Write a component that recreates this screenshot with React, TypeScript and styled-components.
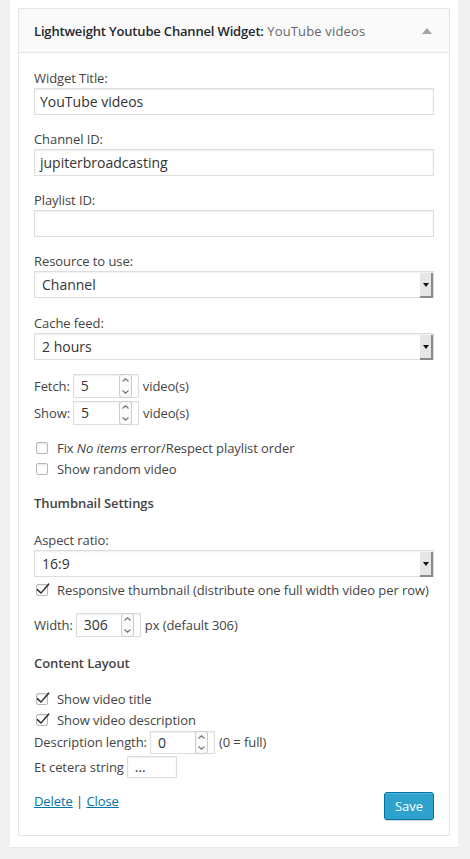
import React from "react";
import styled, { createGlobalStyle } from "styled-components";

const GlobalStyle = createGlobalStyle`
  html, body {
    margin: 0;
    padding: 0;
    background: #f1f1f1;
  }
  body {
    font-family: "Open Sans", "Noto Sans", sans-serif;
    font-size: 13px;
    letter-spacing: -0.08px;
    color: #444;
  }
`;

const Page = styled.div`
  width: 470px;
  padding-bottom: 11px;
`;

const Panel = styled.div`
  margin-left: 10px;
  width: 448px;
  box-sizing: border-box;
  background: #fff;
  padding: 8px 8px 11px;
  box-shadow: 0 1px 1px rgba(0, 0, 0, 0.04);
`;

const Widget = styled.div`
  border: 1px solid #e5e5e5;
  background: #fff;
`;

const WidgetTop = styled.div`
  height: 43px;
  background: #fafafa;
  border-bottom: 1px solid #e5e5e5;
  display: flex;
  align-items: center;
  justify-content: space-between;
  padding: 0 17px 0 15px;
`;

const WidgetTitle = styled.h3`
  margin: 0;
  font-size: 13px;
  font-weight: 600;
  letter-spacing: -0.17px;
  color: #23282d;
  line-height: 20px;
`;

const InTitle = styled.span`
  color: #666;
  font-weight: 400;
  letter-spacing: 0.15px;
`;

const Arrow = styled.span`
  width: 0;
  height: 0;
  border-left: 5px solid transparent;
  border-right: 5px solid transparent;
  border-bottom: 6px solid #a0a5aa;
`;

const WidgetInside = styled.div`
  padding: 15px 15px 15px;
`;

const Field = styled.div<{ $gap?: number }>`
  margin-bottom: ${(p) => (p.$gap ?? 14)}px;
`;

const Label = styled.label`
  display: block;
  line-height: 20px;
  color: #444;
`;

const TextInput = styled.div`
  height: 27px;
  box-sizing: border-box;
  border: 1px solid #ddd;
  box-shadow: inset 0 1px 2px rgba(0, 0, 0, 0.07);
  padding: 0 5px;
  font-size: 14px;
  letter-spacing: 0;
  line-height: 25px;
  color: #333;
`;

const Select = styled.div`
  position: relative;
  height: 27px;
  box-sizing: border-box;
  border: 1px solid #ddd;
  box-shadow: inset 0 1px 2px rgba(0, 0, 0, 0.07);
  padding: 0 7px;
  font-size: 14px;
  letter-spacing: 0;
  line-height: 25px;
  color: #333;
`;

const SelectButton = styled.span`
  position: absolute;
  top: 1px;
  right: 0;
  width: 13px;
  height: 25px;
  background: #e6e6e6;
  border-right: 2px solid #8a8a8a;
  border-bottom: 2px solid #8a8a8a;
  box-sizing: border-box;
  display: flex;
  align-items: center;
  justify-content: center;

  &::after {
    content: "";
    border-left: 3px solid transparent;
    border-right: 3px solid transparent;
    border-top: 4px solid #111;
  }
`;

const InlineRow = styled.div<{ $mb?: number }>`
  display: flex;
  align-items: center;
  height: 24px;
  margin-bottom: ${(p) => p.$mb ?? 3}px;
  color: #444;
  white-space: nowrap;
`;

const NumBox = styled.div<{ $w: number; $h?: number }>`
  position: relative;
  width: ${(p) => p.$w}px;
  height: ${(p) => p.$h ?? 24}px;
  box-sizing: border-box;
  border: 1px solid #ddd;
  box-shadow: inset 0 1px 2px rgba(0, 0, 0, 0.07);
  margin: 0 4px 0 3px;
  padding-left: 7px;
  font-size: 14px;
  letter-spacing: 0;
  line-height: ${(p) => (p.$h ?? 24) - 2}px;
  color: #333;
`;

const Spinner = styled.span`
  position: absolute;
  top: -1px;
  bottom: -1px;
  right: 6px;
  width: 13px;
  border: 1px solid #ccc;
  border-radius: 3px;
  background: #fafafa;
  box-sizing: border-box;
  display: flex;
  flex-direction: column;
  align-items: center;
  justify-content: space-between;
  padding: 3px 0;
`;

const Check = styled.div`
  display: flex;
  align-items: center;
  height: 21px;
  color: #444;
`;

const Box = styled.span`
  position: relative;
  width: 12px;
  height: 12px;
  box-sizing: border-box;
  border: 1px solid #b4b9be;
  border-radius: 2px;
  background: #fff;
  box-shadow: inset 0 1px 2px rgba(0, 0, 0, 0.1);
  margin: 0 9px 0 2px;
  flex: none;
`;

const Tick = styled.svg`
  position: absolute;
  left: -1px;
  top: -4px;
`;

const CheckList = styled.div<{ $mb?: number }>`
  margin-bottom: ${(p) => p.$mb ?? 14}px;
`;

const Heading = styled.h4<{ $mb: number }>`
  margin: 0 0 ${(p) => p.$mb}px;
  font-size: 13px;
  font-weight: 600;
  line-height: 20px;
  color: #444;
`;

const Footer = styled.div`
  display: flex;
  justify-content: space-between;
  align-items: flex-start;
  margin-top: 13px;
`;

const Links = styled.div`
  line-height: 20px;
  margin-top: -1px;
  color: #444;
`;

const Link = styled.a`
  color: #0073aa;
  text-decoration: underline;
`;

const SaveButton = styled.button`
  width: 50px;
  height: 28px;
  box-sizing: border-box;
  background: #2ea2cc;
  border: 1px solid #0074a2;
  border-radius: 3px;
  box-shadow: inset 0 1px 0 rgba(120, 200, 230, 0.5), 0 1px 0 rgba(0, 0, 0, 0.15);
  color: #fff;
  font-family: "Open Sans", sans-serif;
  font-size: 13px;
  padding: 0;
`;

const SpinUp = () => (
  <svg width="7" height="4" viewBox="0 0 7 4">
    <path d="M0.5 3.5 L3.5 0.8 L6.5 3.5" fill="none" stroke="#777" strokeWidth="1.2" />
  </svg>
);

const SpinDown = () => (
  <svg width="7" height="4" viewBox="0 0 7 4">
    <path d="M0.5 0.5 L3.5 3.2 L6.5 0.5" fill="none" stroke="#777" strokeWidth="1.2" />
  </svg>
);

const Number: React.FC<{ value: string; w?: number; h?: number }> = ({ value, w = 66, h }) => (
  <NumBox $w={w} $h={h}>
    {value}
    <Spinner>
      <SpinUp />
      <SpinDown />
    </Spinner>
  </NumBox>
);

const Checkbox: React.FC<{ checked?: boolean; children: React.ReactNode }> = ({ checked, children }) => (
  <Check>
    <Box>
      {checked && (
        <Tick width="14" height="14" viewBox="0 0 14 14">
          <path d="M1.5 7.5 L5 11 L12.5 2 L13.5 3.5 L5 13 L0.5 9 Z" fill="#333" />
        </Tick>
      )}
    </Box>
    <span>{children}</span>
  </Check>
);

const App: React.FC = () => {
  return (
    <Page>
      <GlobalStyle />
      <Panel>
        <Widget>
          <WidgetTop>
            <WidgetTitle>
              Lightweight Youtube Channel Widget:<InTitle> YouTube videos</InTitle>
            </WidgetTitle>
            <Arrow />
          </WidgetTop>
          <WidgetInside>
            <Field>
              <Label>Widget Title:</Label>
              <TextInput>YouTube videos</TextInput>
            </Field>
            <Field>
              <Label>Channel ID:</Label>
              <TextInput>jupiterbroadcasting</TextInput>
            </Field>
            <Field>
              <Label>Playlist ID:</Label>
              <TextInput />
            </Field>
            <Field $gap={15}>
              <Label>Resource to use:</Label>
              <Select>
                Channel
                <SelectButton />
              </Select>
            </Field>
            <Field $gap={14}>
              <Label>Cache feed:</Label>
              <Select>
                2 hours
                <SelectButton />
              </Select>
            </Field>

            <InlineRow>
              Fetch: <Number value="5" /> video(s)
            </InlineRow>
            <InlineRow $mb={12}>
              Show: <Number value="5" /> video(s)
            </InlineRow>

            <CheckList>
              <Checkbox>
                Fix <i>No items</i>&nbsp;error/Respect playlist order
              </Checkbox>
              <Checkbox>Show random video</Checkbox>
            </CheckList>

            <Heading $mb={17}>Thumbnail Settings</Heading>
            <Field $gap={2}>
              <Label>Aspect ratio:</Label>
              <Select>
                16:9
                <SelectButton />
              </Select>
            </Field>
            <CheckList $mb={13}>
              <Checkbox checked>Responsive thumbnail (distribute one full width video per row)</Checkbox>
            </CheckList>
            <InlineRow $mb={16}>
              Width: <Number value="306" w={65} /> px (default 306)
            </InlineRow>

            <Heading $mb={15}>Content Layout</Heading>
            <CheckList $mb={0}>
              <Checkbox checked>Show video title</Checkbox>
              <Checkbox checked>Show video description</Checkbox>
            </CheckList>
            <InlineRow $mb={1}>
              Description length: <Number value="0" w={65} h={23} /> (0 = full)
            </InlineRow>
            <InlineRow $mb={0}>
              Et cetera string <NumBox $w={50} $h={22}>…</NumBox>
            </InlineRow>

            <Footer>
              <Links>
                <Link href="#">Delete</Link> | <Link href="#">Close</Link>
              </Links>
              <SaveButton>Save</SaveButton>
            </Footer>
          </WidgetInside>
        </Widget>
      </Panel>
    </Page>
  );
};

export default App;
